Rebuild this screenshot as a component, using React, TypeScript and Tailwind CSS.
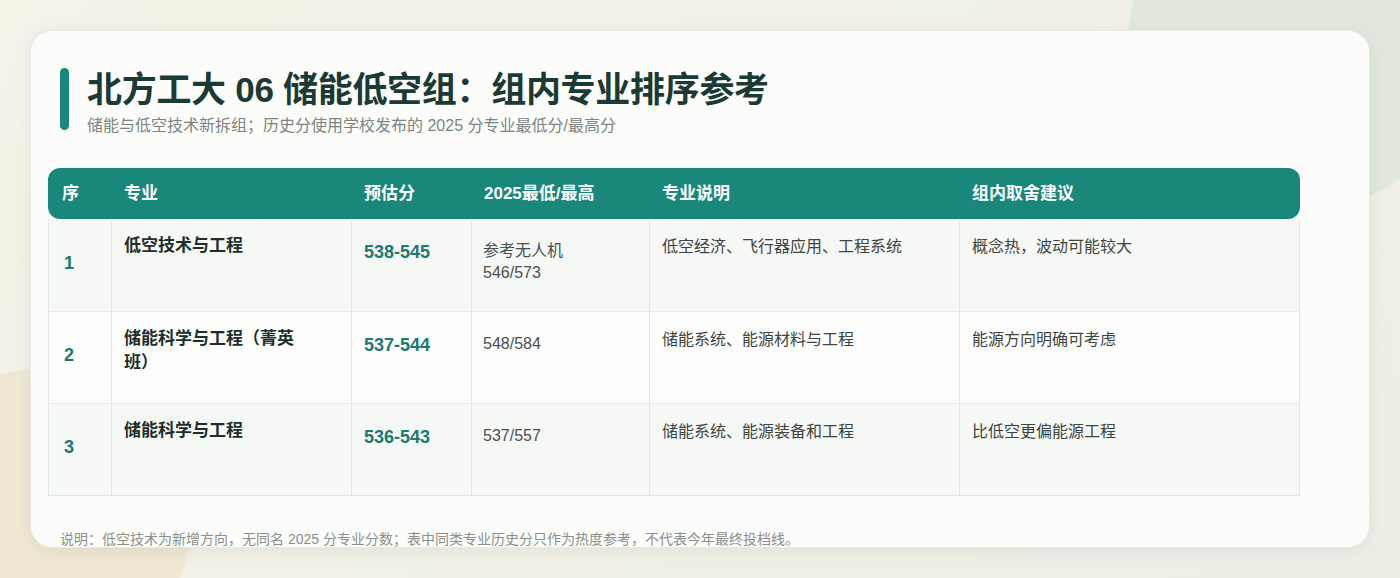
import React from "react";

const rows = [
  { n: "1", name: "低空技术与工程", est: "538-545", hist: "参考无人机\n546/573", desc: "低空经济、飞行器应用、工程系统", adv: "概念热，波动可能较大", bg: "bg-[#f6f8f6]" },
  { n: "2", name: "储能科学与工程（菁英班）", est: "537-544", hist: "548/584", desc: "储能系统、能源材料与工程", adv: "能源方向明确可考虑", bg: "bg-[#fdfdfc]" },
  { n: "3", name: "储能科学与工程", est: "536-543", hist: "537/557", desc: "储能系统、能源装备和工程", adv: "比低空更偏能源工程", bg: "bg-[#f6f8f6]" },
];

const cols = "grid grid-cols-[62px_240px_120px_178px_310px_342px]";

export default function App() {
  return (
    <div
      className="h-[578px] w-[1400px] overflow-hidden pt-[30px] pl-[30px] bg-[radial-gradient(circle_at_1300px_40px,#e0e8de_0,#e0e8de_170px,transparent_172px),radial-gradient(circle_at_40px_520px,#efe6d4_0,#efe6d4_150px,transparent_152px),linear-gradient(135deg,#f5f2e8,#eeeee6)]"
      style={{ fontFamily: '"Liberation Sans", "Noto Sans CJK SC", sans-serif' }}
    >
      <div className="w-[1340px] h-[518px] rounded-[22px] bg-[#fcfcfa] shadow-[0_4px_20px_rgba(0,0,0,0.06)] border border-[#ebe8e0]">
        <div className="flex gap-[18px] pl-[29px] pt-[37px]">
          <div className="w-[9px] h-[62px] rounded-full bg-[#1a877b]" />
          <div>
            <h1 className="text-[35px] leading-[44px] font-bold text-[#1c3a34] tracking-[-0.3px]">北方工大 06 储能低空组：组内专业排序参考</h1>
            <p className="text-[16px] text-[#7d8580] mt-[2px]">储能与低空技术新拆组；历史分使用学校发布的 2025 分专业最低分/最高分</p>
          </div>
        </div>
        <div className="ml-[17px] mt-[30px] w-[1252px]">
          <div className={`${cols} h-[51px] items-center rounded-[12px] bg-[#1a877b] text-white font-bold text-[17px]`}>
            <div className="pl-[14px]">序</div>
            <div className="pl-[14px]">专业</div>
            <div className="pl-[14px]">预估分</div>
            <div className="pl-[14px]">2025最低/最高</div>
            <div className="pl-[14px]">专业说明</div>
            <div className="pl-[14px]">组内取舍建议</div>
          </div>
          <div className="border-l border-r border-b border-[#e3e7e3]">
            {rows.map((r, i) => (
              <div key={r.n} className={`${cols} h-[92px] ${r.bg} ${i > 0 ? "border-t border-[#e8ebe8]" : ""} text-[16px]`}>
                <div className="pl-[15px] flex items-center pb-[4px] font-bold text-[#1a7b70] text-[18px]">{r.n}</div>
                <div className="border-l border-[#e3e7e3] pl-[12px] pr-[40px] pt-[15px] font-bold text-[#1c2f2b] text-[17px] leading-[24px]">{r.name}</div>
                <div className="border-l border-[#e3e7e3] px-[12px] pt-[20px] font-bold text-[#1a7b70] text-[18px]">{r.est}</div>
                <div className="border-l border-[#e3e7e3] px-[11px] pt-[21px] text-[#4a504d] leading-[22px] whitespace-pre-line">{r.hist}</div>
                <div className="border-l border-[#e3e7e3] px-[12px] pt-[16px] text-[#3d4541]">{r.desc}</div>
                <div className="border-l border-[#e3e7e3] px-[12px] pt-[16px] text-[#3d4541]">{r.adv}</div>
              </div>
            ))}
          </div>
        </div>
        <p className="pl-[29px] mt-[33px] text-[14px] text-[#8a908c]">说明：低空技术为新增方向，无同名 2025 分专业分数；表中同类专业历史分只作为热度参考，不代表今年最终投档线。</p>
      </div>
    </div>
  );
}
